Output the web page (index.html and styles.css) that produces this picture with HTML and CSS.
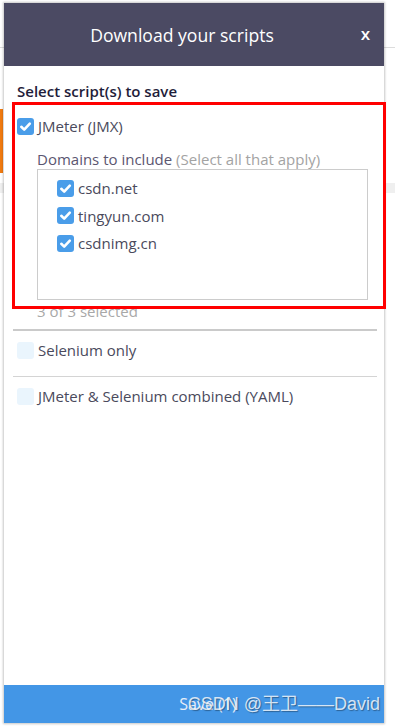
FILE: index.html
```html
<!DOCTYPE html>
<html lang="en">
<head>
<meta charset="utf-8">
<title>Download your scripts</title>
<link rel="stylesheet" href="styles.css">
</head>
<body>
<div class="page">
  <div class="page-top"></div>
  <div class="page-band"></div>
  <div class="page-strip"></div>
</div>

<div class="modal">
  <div class="modal-header">
    <h1 class="modal-title">Download your scripts</h1>
    <span class="modal-close">x</span>
  </div>
  <div class="modal-body">
    <div class="section-title">Select script(s) to save</div>

    <label class="option option-jmx">
      <span class="cb checked"><svg viewBox="0 0 17 17"><path d="M4.3 8.8 L7.2 11.6 L12.8 5.6" /></svg></span>
      <span class="option-label">JMeter (JMX)</span>
    </label>

    <div class="domains">
      <div class="domains-label">Domains to include <span class="hint">(Select all that apply)</span></div>
      <div class="listbox">
        <label class="item"><span class="cb checked"><svg viewBox="0 0 17 17"><path d="M4.3 8.8 L7.2 11.6 L12.8 5.6" /></svg></span><span class="item-label">csdn.net</span></label>
        <label class="item"><span class="cb checked"><svg viewBox="0 0 17 17"><path d="M4.3 8.8 L7.2 11.6 L12.8 5.6" /></svg></span><span class="item-label">tingyun.com</span></label>
        <label class="item"><span class="cb checked"><svg viewBox="0 0 17 17"><path d="M4.3 8.8 L7.2 11.6 L12.8 5.6" /></svg></span><span class="item-label">csdnimg.cn</span></label>
      </div>
      <div class="count">3 of 3 selected</div>
    </div>

    <hr class="sep sep-strong">

    <label class="option">
      <span class="cb"></span>
      <span class="option-label">Selenium only</span>
    </label>

    <hr class="sep">

    <label class="option">
      <span class="cb"></span>
      <span class="option-label">JMeter &amp; Selenium combined (YAML)</span>
    </label>
  </div>
  <div class="modal-footer">
    <span class="save">Save (1)</span>
    <span class="watermark">CSDN @王卫——David</span>
  </div>
</div>

<div class="highlight"></div>
</body>
</html>
```

FILE: styles.css
```css
* { box-sizing: border-box; }

html, body {
  margin: 0;
  padding: 0;
  background: #ffffff;
  font-family: "Open Sans", "Noto Sans", sans-serif;
  overflow: hidden;
}

body {
  width: 395px;
  height: 727px;
  position: relative;
}

/* background page, only visible at the edges */
.page {
  display: flex;
  flex-direction: column;
}
.page-top {
  height: 48px;
  border-bottom: 1px solid #dcdcdc;
}
.page-band {
  margin-top: 61px;
  height: 64px;
  border-left: 3px solid #f07a10;
}
.page-strip {
  margin-top: 10px;
  height: 10px;
  background: #efefef;
}

/* modal */
.modal {
  position: absolute;
  left: 4px;
  top: 3px;
  width: 380px;
  height: 720px;
  background: #ffffff;
  display: flex;
  flex-direction: column;
  box-shadow: 0 0 2px 1px rgba(0, 0, 0, 0.22);
}

.modal-header {
  height: 63px;
  background: #4b4a63;
  display: flex;
  align-items: center;
  justify-content: center;
  padding-right: 24px;
  position: relative;
}
.modal-title {
  margin: 0;
  font-size: 17.6px;
  font-weight: 400;
  color: #ffffff;
}
.modal-close {
  position: absolute;
  right: 14px;
  top: 20px;
  color: #ffffff;
  font-size: 17px;
  font-weight: 600;
  line-height: 22px;
}

.modal-body {
  flex: 1;
  padding: 0 7px 0 13px;
  display: flex;
  flex-direction: column;
}

.section-title {
  margin-top: 15px;
  font-size: 15px;
  font-weight: 600;
  line-height: 20px;
  color: #1f1d3a;
}

.option {
  display: flex;
  align-items: center;
  gap: 4px;
  height: 18px;
  font-size: 15px;
  color: #4a4a5c;
}
.option-jmx { margin-top: 16px; }

.cb {
  width: 17px;
  height: 17px;
  border-radius: 3px;
  background: #eaf5fd;
  flex: none;
  display: flex;
}
.cb.checked { background: #4a9de9; }
.cb svg {
  width: 17px;
  height: 17px;
}
.cb svg path {
  fill: none;
  stroke: #ffffff;
  stroke-width: 2.6;
  stroke-linecap: round;
  stroke-linejoin: round;
}

.domains {
  padding-left: 20px;
  margin-top: 14px;
  display: flex;
  flex-direction: column;
}
.domains-label {
  font-size: 15px;
  line-height: 20px;
  color: #5b5670;
}
.hint { color: #a3a3a3; }

.listbox {
  width: 331px;
  height: 131px;
  border: 1px solid #cccccc;
  padding: 9px 0 0 19px;
  display: flex;
  flex-direction: column;
  gap: 9.5px;
}
.item {
  display: flex;
  align-items: center;
  gap: 4px;
  height: 18px;
  font-size: 15px;
  color: #4a4a5c;
}

.count {
  margin-top: 2px;
  font-size: 15px;
  line-height: 18px;
  color: #a8a8a8;
}

.sep {
  margin: 9px 0 0 -4px;
  border: 0;
  border-top: 1px solid #d4d4d4;
  height: 0;
}
.sep-strong { border-top: 2px solid #cacaca; }
.sep-strong + .option { margin-top: 10px; }
.sep:not(.sep-strong) { margin-top: 17px; }
.sep:not(.sep-strong) + .option { margin-top: 10px; }

.modal-footer {
  height: 38px;
  background: #4396e6;
  display: flex;
  align-items: center;
  justify-content: center;
  position: relative;
}
.save {
  padding-left: 28px;
  font-size: 16px;
  color: #e6eef8;
}
.watermark {
  position: absolute;
  right: 4px;
  top: 8px;
  font-family: "Liberation Sans", "Noto Sans CJK SC", sans-serif;
  font-size: 18px;
  line-height: 22px;
  color: rgba(255, 255, 255, 0.8);
  text-shadow: 1px 1px 1px rgba(0, 0, 0, 0.35);
}

/* red annotation rectangle */
.highlight {
  position: absolute;
  left: 12px;
  top: 102px;
  width: 374px;
  height: 207px;
  border: 3px solid #ff0000;
}
```
